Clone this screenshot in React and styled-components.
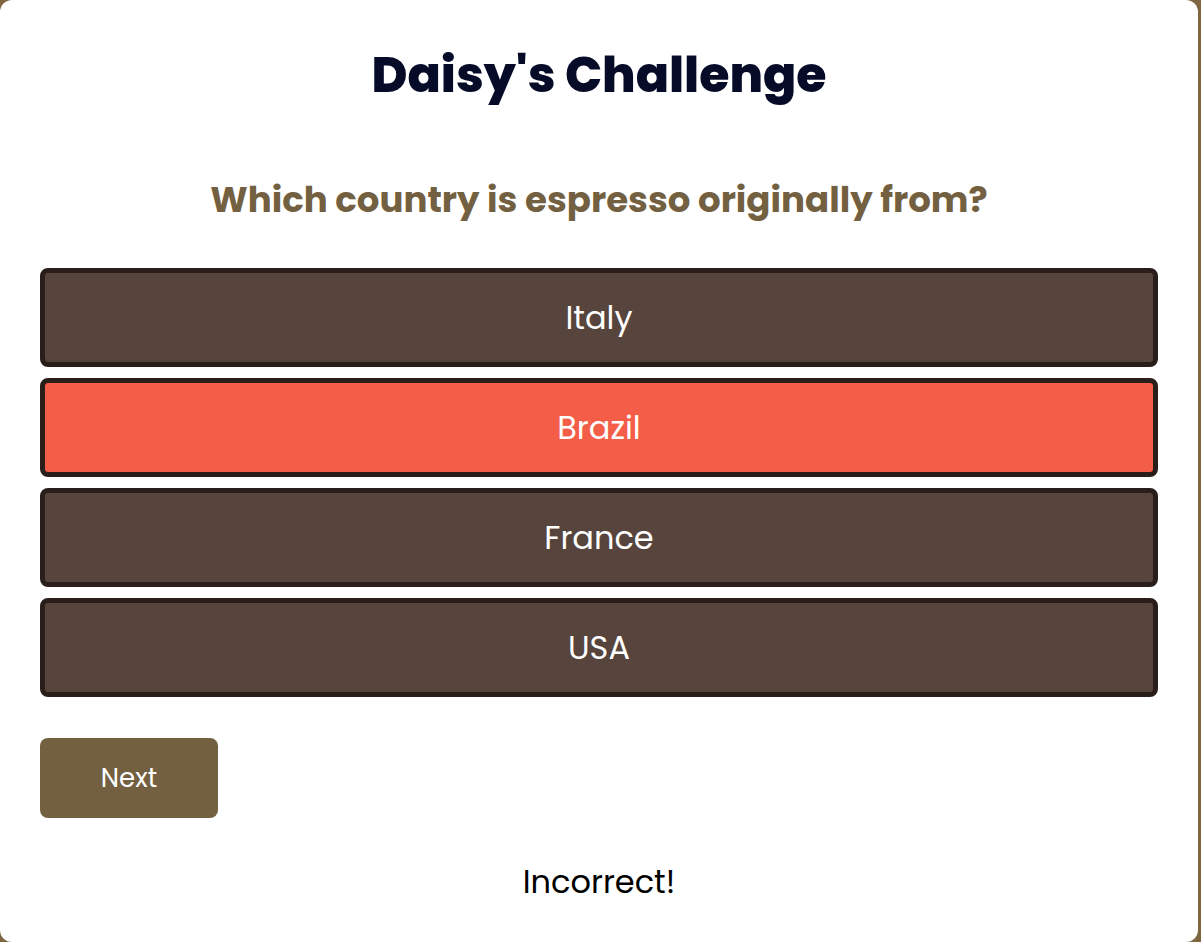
import React, { useState } from "react";
import styled, { createGlobalStyle } from "styled-components";

const GlobalStyle = createGlobalStyle`
  html, body {
    margin: 0;
    padding: 0;
    background: #7d6640;
  }
  body {
    font-family: Poppins, Inter, "Noto Sans", sans-serif;
  }
`;

const Card = styled.div`
  box-sizing: border-box;
  width: 1198px;
  height: 942px;
  background: #ffffff;
  border-radius: 12px;
  padding: 44px 40px 0;
  display: flex;
  flex-direction: column;
`;

const Title = styled.h1`
  margin: 0;
  text-align: center;
  font-size: 49px;
  font-weight: 800;
  line-height: 62px;
  color: #060b28;
`;

const Question = styled.h2`
  margin: 71px 0 45px;
  text-align: center;
  font-size: 35.6px;
  font-weight: 700;
  line-height: 46px;
  color: #736041;
`;

const Options = styled.div`
  display: flex;
  flex-direction: column;
  gap: 11px;
`;

const Option = styled.button`
  box-sizing: border-box;
  height: 99px;
  width: 100%;
  border: 5px solid #2a1e1b;
  border-radius: 8px;
  background: ${({ $wrong }) => ($wrong ? "#f45d48" : "#56443d")};
  color: #ffffff;
  font-family: inherit;
  font-size: 32px;
  font-weight: 400;
  cursor: pointer;
`;

const NextButton = styled.button`
  margin-top: 41px;
  width: 178px;
  height: 80px;
  border: none;
  border-radius: 8px;
  background: #736041;
  color: #ffffff;
  font-family: inherit;
  font-size: 26px;
  font-weight: 400;
  cursor: pointer;
`;

const Result = styled.p`
  margin: 40px 0 0;
  text-align: center;
  font-size: 32px;
  line-height: 48px;
  font-weight: 400;
  color: #000000;
`;

const answers = ["Italy", "Brazil", "France", "USA"];

export default function App() {
  const [picked, setPicked] = useState("Brazil");

  return (
    <>
      <GlobalStyle />
      <Card>
        <Title>Daisy's Challenge</Title>
        <Question>Which country is espresso originally from?</Question>
        <Options>
          {answers.map(a => (
            <Option
              key={a}
              $wrong={picked === a && a !== "Italy"}
              onClick={() => setPicked(a)}
            >
              {a}
            </Option>
          ))}
        </Options>
        <div>
          <NextButton>Next</NextButton>
        </div>
        <Result>{picked === "Italy" ? "Correct!" : "Incorrect!"}</Result>
      </Card>
    </>
  );
}
